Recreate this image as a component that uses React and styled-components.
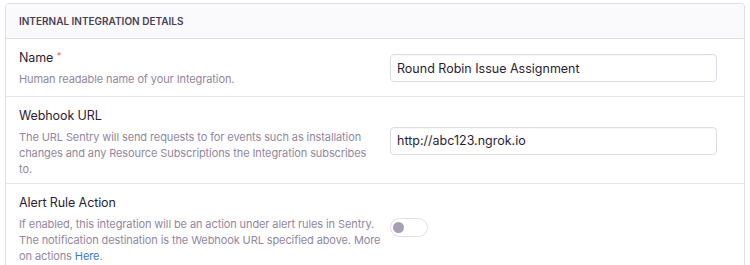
import styled, { createGlobalStyle } from "styled-components";

const GlobalStyle = createGlobalStyle`
  body {
    margin: 0;
    background: #ffffff;
    font-family: Inter, "Noto Sans", sans-serif;
  }
`;

const Page = () => {
  return (
    <Wrapper>
      <GlobalStyle />
      <Panel>
        <PanelHeader>Internal Integration Details</PanelHeader>

        <Field>
          <Description>
            <Label>
              Name <Required>*</Required>
            </Label>
            <Help>Human readable name of your Integration.</Help>
          </Description>
          <Control>
            <Input defaultValue="Round Robin Issue Assignment" />
          </Control>
        </Field>

        <Field>
          <Description>
            <Label>Webhook URL</Label>
            <Help>
              The URL Sentry will send requests to for events such as
              installation changes and any Resource Subscriptions the
              Integration subscribes to.
            </Help>
          </Description>
          <Control>
            <Input defaultValue="http://abc123.ngrok.io" />
          </Control>
        </Field>

        <Field>
          <Description>
            <Label>Alert Rule Action</Label>
            <Help>
              If enabled, this integration will be an action under alert rules
              in Sentry. The notification destination is the Webhook URL
              specified above. More on actions <Link href="#">Here</Link>.
            </Help>
          </Description>
          <Control>
            <Switch aria-label="Alert Rule Action">
              <Knob />
            </Switch>
          </Control>
        </Field>
      </Panel>
    </Wrapper>
  );
};

const Wrapper = styled.div`
  padding: 3px 5px 0 5px;
  height: 265px;
  box-sizing: border-box;
  overflow: hidden;
`;

const Panel = styled.div`
  border: 1px solid #e2dee6;
  border-radius: 4px;
  background: #fff;
  overflow: hidden;
`;

const PanelHeader = styled.div`
  background: #faf9fb;
  border-bottom: 1px solid #e2dee6;
  padding: 11px 13px;
  font-size: 10px;
  line-height: 12px;
  font-weight: 600;
  text-transform: uppercase;
  color: #4a3e56;
`;

const Field = styled.div`
  display: flex;
  align-items: center;
  padding: 11px 27px 6px 13px;
  border-bottom: 1px solid #e7e1ec;
`;

const Description = styled.div`
  flex: 1;
  padding-right: 8px;
  align-self: flex-start;
`;

const Label = styled.div`
  font-size: 12.5px;
  line-height: 16px;
  letter-spacing: -0.1px;
  color: #2b1d38;
`;

const Required = styled.span`
  color: #f55459;
  font-size: 9px;
  vertical-align: top;
  line-height: 12px;
`;

const Help = styled.div`
  margin-top: 5px;
  font-size: 11px;
  line-height: 16px;
  letter-spacing: -0.1px;
  color: #9386a0;
`;

const Link = styled.a`
  color: #3d74db;
  text-decoration: none;
`;

const Control = styled.div`
  flex: 0 0 327px;
  padding: 4px 0 8px;
  display: flex;
  align-items: center;
`;

const Input = styled.input`
  width: 100%;
  height: 28px;
  box-sizing: border-box;
  border: 1px solid #e0dce5;
  border-radius: 4px;
  padding: 0 6px;
  font-family: Inter, "Noto Sans", sans-serif;
  font-size: 12.5px;
  color: #2b1d38;
  outline: none;
  box-shadow: inset 0 1px 1px rgba(0, 0, 0, 0.03);
`;

const Switch = styled.div`
  width: 38px;
  height: 19px;
  box-sizing: border-box;
  border: 1px solid #e2dee6;
  border-radius: 10px;
  display: flex;
  align-items: center;
  padding-left: 2px;
`;

const Knob = styled.span`
  width: 11px;
  height: 11px;
  border-radius: 50%;
  background: #a99fb5;
`;

export default Page;
